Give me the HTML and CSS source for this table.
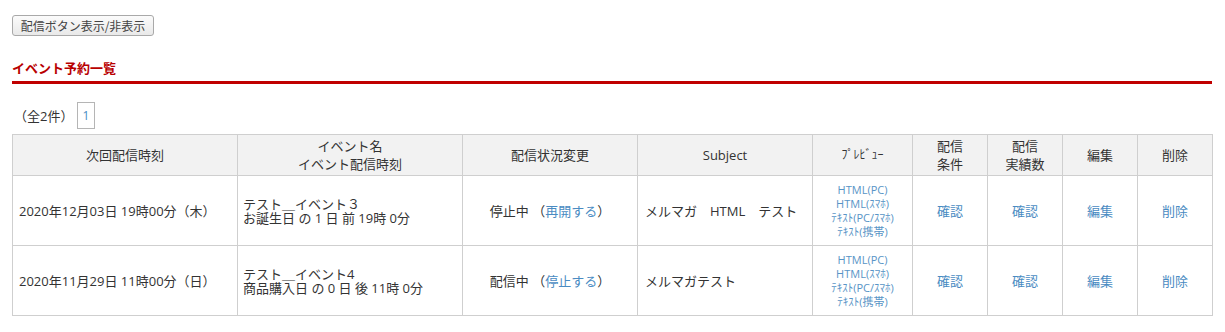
FILE: index.html
```html
<!DOCTYPE html>
<html lang="ja">
<head>
<meta charset="utf-8">
<title>イベント予約一覧</title>
<link rel="stylesheet" href="styles.css">
</head>
<body>
<div class="page">
  <button class="toggle-btn" type="button">配信ボタン表示/非表示</button>
  <h2 class="section-title">イベント予約一覧</h2>
  <div class="pager">
    <span class="pager-count">（全2件）</span>
    <span class="pager-page">1</span>
  </div>
  <table class="event-table">
    <colgroup>
      <col class="c-225"><col class="c-225"><col class="c-175"><col class="c-175"><col class="c-100"><col class="c-75"><col class="c-75"><col class="c-75"><col class="c-75">
    </colgroup>
    <thead>
      <tr>
        <th>次回配信時刻</th>
        <th>イベント名<br>イベント配信時刻</th>
        <th>配信状況変更</th>
        <th>Subject</th>
        <th class="hw">ﾌﾟﾚﾋﾞｭｰ</th>
        <th>配信<br>条件</th>
        <th>配信<br>実績数</th>
        <th>編集</th>
        <th>削除</th>
      </tr>
    </thead>
    <tbody>
      <tr>
        <td class="left">2020年12月03日 19時00分（木）</td>
        <td class="left event"><div>テスト＿イベント３</div><div>お誕生日 の 1 日 前 19時 0分</div></td>
        <td class="center">停止中 （<a href="#">再開する</a>）</td>
        <td class="left subj">メルマガ　HTML　テスト</td>
        <td class="center preview"><a href="#">HTML(PC)</a><a href="#">HTML(ｽﾏﾎ)</a><a href="#">ﾃｷｽﾄ(PC/ｽﾏﾎ)</a><a href="#">ﾃｷｽﾄ(携帯)</a></td>
        <td class="center"><a href="#">確認</a></td>
        <td class="center"><a href="#">確認</a></td>
        <td class="center"><a href="#">編集</a></td>
        <td class="center"><a href="#">削除</a></td>
      </tr>
      <tr>
        <td class="left">2020年11月29日 11時00分（日）</td>
        <td class="left event"><div>テスト＿イベント4</div><div>商品購入日 の 0 日 後 11時 0分</div></td>
        <td class="center">配信中 （<a href="#">停止する</a>）</td>
        <td class="left subj">メルマガテスト</td>
        <td class="center preview"><a href="#">HTML(PC)</a><a href="#">HTML(ｽﾏﾎ)</a><a href="#">ﾃｷｽﾄ(PC/ｽﾏﾎ)</a><a href="#">ﾃｷｽﾄ(携帯)</a></td>
        <td class="center"><a href="#">確認</a></td>
        <td class="center"><a href="#">確認</a></td>
        <td class="center"><a href="#">編集</a></td>
        <td class="center"><a href="#">削除</a></td>
      </tr>
    </tbody>
  </table>
</div>
</body>
</html>
```

FILE: styles.css
```css
* { box-sizing: border-box; }
html, body { margin: 0; padding: 0; background: #fff; }
body {
  font-family: "Open Sans", "Noto Sans CJK JP", sans-serif;
  font-size: 13px;
  color: #333;
}
.page {
  padding: 15px 13px 0 12px;
}
.toggle-btn {
  display: block;
  height: 21px;
  width: 142px;
  padding: 0;
  font-family: "Noto Sans CJK JP", sans-serif;
  font-size: 12px;
  line-height: 19px;
  color: #444;
  background: linear-gradient(#fbfbfb, #e9e9e9);
  border: 1px solid #a9a9a9;
  border-radius: 3px;
}
.section-title {
  margin: 23px 0 0;
  padding: 0 0 4px;
  font-family: "Noto Sans CJK JP", sans-serif;
  font-size: 13px;
  line-height: 18px;
  font-weight: bold;
  color: #b80000;
  border-bottom: 3px solid #c00000;
}
.pager {
  display: flex;
  align-items: center;
  margin-top: 18px;
  height: 27px;
}
.pager-count {
  margin-left: 2px;
  width: 63px;
}
.pager-page {
  display: flex;
  align-items: center;
  justify-content: center;
  width: 18px;
  height: 27px;
  border: 1px solid #b5b5b5;
  color: #4a8bc2;
  font-size: 12px;
}
.event-table {
  margin-top: 5px;
  width: 1200px;
  border-collapse: collapse;
  table-layout: fixed;
}
.c-225 { width: 225px; }
.c-175 { width: 175px; }
.c-100 { width: 100px; }
.c-75 { width: 75px; }
.event-table th,
.event-table td {
  border: 1px solid #cfcfcf;
  padding: 0;
}
.event-table th {
  height: 41px;
  background: #f2f2f2;
  font-weight: normal;
  line-height: 18px;
  text-align: center;
}
.event-table td {
  height: 70px;
  vertical-align: middle;
}
.left { text-align: left; padding-left: 6px !important; }
.event { line-height: 14px; padding-left: 5px !important; }
.subj { padding-left: 7px !important; }
.center { text-align: center; }
a { color: #4a8bc2; text-decoration: none; }
.preview { line-height: 14px; font-size: 11px; }
.preview a { display: block; color: #5894c6; }
.hw { font-size: 12px; }
```
